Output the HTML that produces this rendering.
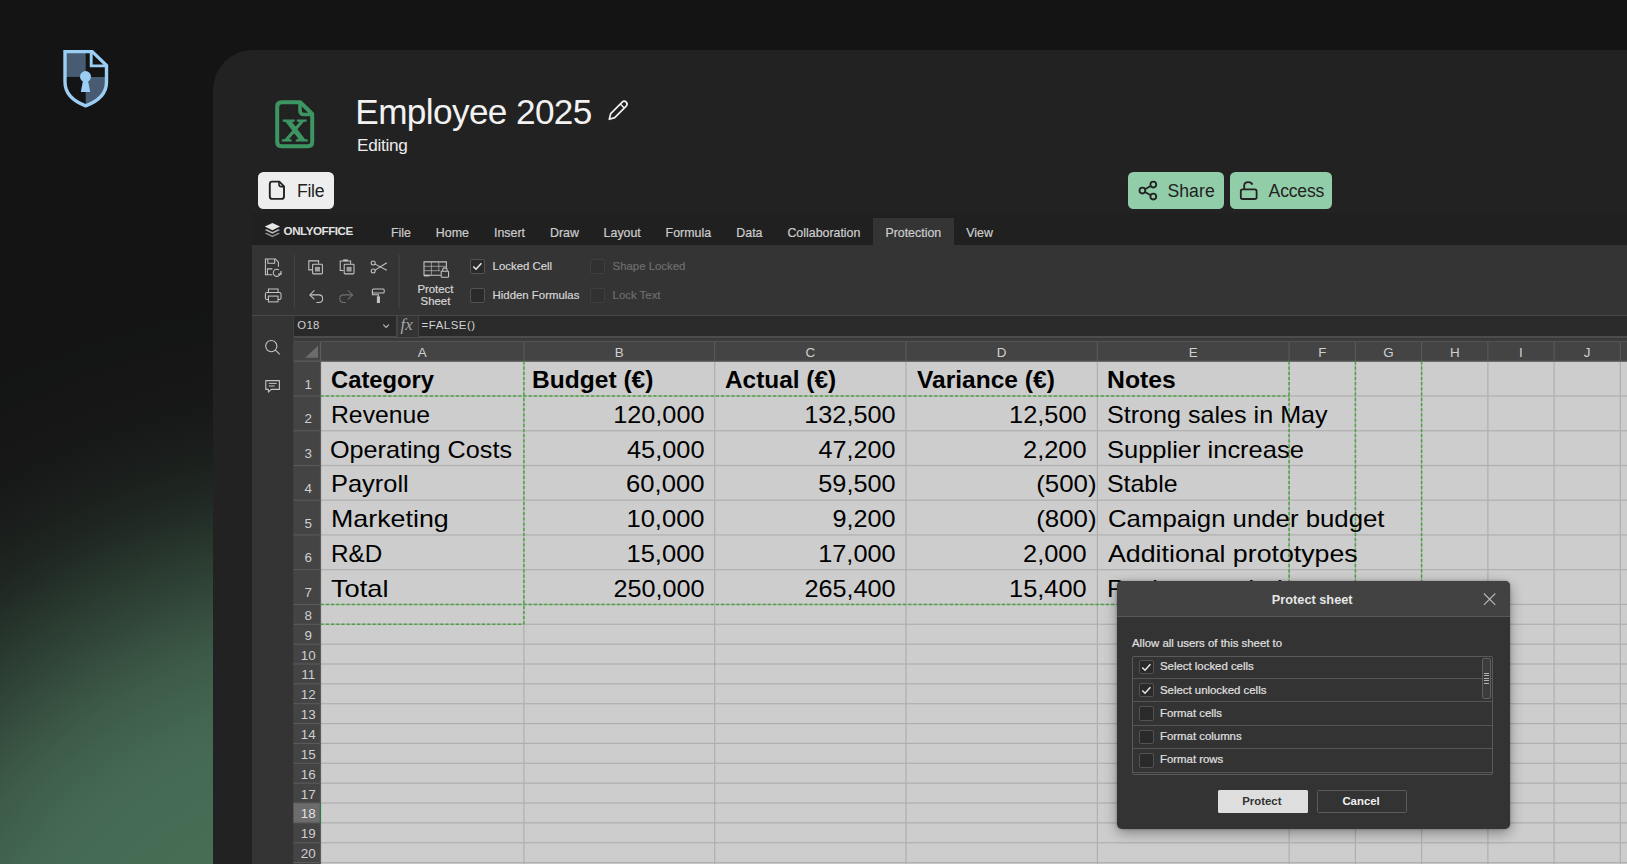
<!DOCTYPE html>
<html><head><meta charset="utf-8"><title>Employee 2025</title>
<style>
*{box-sizing:border-box;margin:0;padding:0}
html,body{width:1627px;height:864px;overflow:hidden;background:#141414;font-family:"Liberation Sans",sans-serif;}
.abs{position:absolute}
.t{position:absolute;white-space:nowrap;line-height:1;}
.ui{font-size:11.4px;color:#d6d6d6;-webkit-text-stroke:0.2px currentColor;}
.tab{position:absolute;font-size:12.4px;color:#cdcdcd;top:226.7px;-webkit-text-stroke:0.2px #cdcdcd;white-space:nowrap;line-height:1}
.cell{position:absolute;white-space:nowrap;line-height:1;font-size:23.4px;color:#000;}
.rh{position:absolute;color:#cfcfcf;font-size:13.4px;line-height:1;text-align:center;white-space:nowrap}
.ch{position:absolute;color:#cfcfcf;font-size:13.4px;line-height:1;text-align:center;white-space:nowrap}
.cb{position:absolute;width:14.5px;height:14.5px;border:1px solid #505050;background:#2a2a2a;border-radius:2px}
</style></head><body>

<div class="abs" id="glow" style="left:0;top:0;width:1627px;height:864px;background:radial-gradient(circle 803px at 350px 1090px,#486e56 0px,#486e56 263px,#486d55 290px,#476c55 317px,#466b54 344px,#456952 371px,#436650 398px,#40614c 425px,#3d5b48 452px,#395342 479px,#334a3c 506px,#2e4135 533px,#29382e 560px,#232f28 587px,#1f2722 614px,#1c211e 641px,#191c1a 668px,#171918 695px,#161716 722px,#151615 749px,#141515 776px,#141414 803px);"></div>
<svg class="abs" style="left:60px;top:46px" width="52" height="64" viewBox="60 46 52 64">
<path d="M65 51.6H92.2L106.5 65.4V82C106.5 94.5 97 101.6 85.7 105.8C74.4 101.6 65 94.5 65 82Z" fill="#141414"/>
<path d="M65 51.6H85.7V76.9H65Z" fill="#475c72"/>
<path d="M85.7 76.9H106.5V82C106.5 94.5 97 101.6 85.7 105.8Z" fill="#475c72"/>
<path d="M91.2 52V65.9H105.5" fill="none" stroke="#9ccdf5" stroke-width="2.9"/>
<path d="M65 51.6H92.2L106.5 65.4V82C106.5 94.5 97 101.6 85.7 105.8C74.4 101.6 65 94.5 65 82Z" fill="none" stroke="#9ccdf5" stroke-width="3.4" stroke-linejoin="miter"/>
<circle cx="85.5" cy="76.6" r="5.5" fill="#9ccdf5"/>
<path d="M83.3 79H87.7L90.2 92H80.8Z" fill="#9ccdf5"/>
</svg>
<div class="abs" style="left:213px;top:50.2px;width:1500px;height:900px;background:#222222;border-radius:40px 0 0 0;"></div>
<svg class="abs" style="left:270px;top:95px" width="50" height="60" viewBox="270 95 50 60">
<path d="M281.5 102.3H300.5L312.2 114V141.8Q312.2 146.3 307.7 146.3H281.5Q277.2 146.3 277.2 141.8V106.8Q277.2 102.3 281.5 102.3Z" fill="none" stroke="#3d9562" stroke-width="4" stroke-linejoin="round"/>
<path d="M300 103V110.5Q300 114.5 304 114.5H311.5" fill="none" stroke="#3d9562" stroke-width="3.6"/>
<text x="0" y="0" transform="translate(294.9 141.4) scale(1.1 0.98)" text-anchor="middle" font-family="Liberation Serif" font-size="47" fill="#3d9562" stroke="#3d9562" stroke-width="1.2">x</text>
</svg>
<div class="t" id="title" style="left:355.3px;top:94.3px;font-size:35.2px;color:#f2f2f2;letter-spacing:-0.62px">Employee 2025</div>
<div class="t" id="editing" style="left:357px;top:136.6px;font-size:17.2px;color:#ececec;letter-spacing:-0.3px">Editing</div>
<svg class="abs" style="left:604px;top:96px" width="28" height="28" viewBox="604 96 28 28">
<path d="M609.3 119.3L610.7 113.6L622.2 102.1Q624.2 100.1 626.2 102.1Q628.2 104.1 626.2 106.1L614.7 117.6Z" fill="none" stroke="#f0f0f0" stroke-width="1.7" stroke-linejoin="round"/>
<path d="M620.3 104L624.3 108" stroke="#f0f0f0" stroke-width="1.5"/>
</svg>
<div class="abs" style="left:257.8px;top:172.1px;width:76.6px;height:36.6px;background:#eeeeee;border-radius:5.5px"></div>
<svg class="abs" style="left:265px;top:177px" width="24" height="26" viewBox="265 177 24 26">
<path d="M272.2 181.6H279.3L284 186.3V196.5Q284 198.9 281.6 198.9H272.2Q269.8 198.9 269.8 196.5V184Q269.8 181.6 272.2 181.6Z" fill="none" stroke="#222" stroke-width="1.9" stroke-linejoin="round"/>
<path d="M279 182V184.6Q279 186.6 281 186.6H283.6" fill="none" stroke="#222" stroke-width="1.6"/>
</svg>
<div class="t" id="filebtn" style="left:297px;top:182.9px;font-size:17.6px;color:#222;letter-spacing:-0.3px">File</div>
<div class="abs" style="left:1128.4px;top:172.1px;width:95.6px;height:36.6px;background:#92cdaa;border-radius:5.5px"></div>
<div class="abs" style="left:1229.8px;top:172.1px;width:102.7px;height:36.6px;background:#92cdaa;border-radius:5.5px"></div>
<svg class="abs" style="left:1135px;top:178px" width="26" height="26" viewBox="1135 178 26 26">
<g fill="none" stroke="#222" stroke-width="1.8">
<circle cx="1153.3" cy="184.6" r="2.9"/><circle cx="1142.4" cy="190.6" r="2.9"/><circle cx="1153.3" cy="196.6" r="2.9"/>
<path d="M1144.9 189.2L1150.8 186M1144.9 192L1150.8 195.2"/>
</g></svg>
<div class="t" id="share" style="left:1167.4px;top:182.9px;font-size:17.6px;color:#222;letter-spacing:0.1px">Share</div>
<svg class="abs" style="left:1236px;top:178px" width="26" height="26" viewBox="1236 178 26 26">
<g fill="none" stroke="#222" stroke-width="1.8" stroke-linejoin="round">
<rect x="1240.8" y="189.4" width="15.8" height="9.6" rx="1.8"/>
<path d="M1244.2 189.2V185.6Q1244.2 182.2 1248.2 182.2Q1251.6 182.2 1252.4 184.6"/>
</g></svg>
<div class="t" id="access" style="left:1268.6px;top:182.9px;font-size:17.6px;color:#222;letter-spacing:-0.2px">Access</div>
<div class="abs" style="left:252.2px;top:213.0px;width:1400px;height:32.30000000000001px;background:#202020"></div>
<div class="abs" style="left:252.2px;top:245.3px;width:1400px;height:70.19999999999999px;background:#343434"></div>
<div class="abs" style="left:252.2px;top:315.5px;width:1400px;height:548.5px;background:#343434"></div>
<div class="abs" style="left:872.7px;top:217.8px;width:81px;height:28.5px;background:#343434"></div>
<svg class="abs" style="left:262px;top:220px" width="22" height="20" viewBox="262 220 22 20">
<path d="M272.4 223L280 226.6L272.4 230.2L264.8 226.6Z" fill="#e6e6e6"/>
<path d="M266.6 229.2L264.8 230.1L272.4 233.7L280 230.1L278.2 229.2L272.4 232Z" fill="#bdbdbd"/>
<path d="M266.6 232.7L264.8 233.6L272.4 237.2L280 233.6L278.2 232.7L272.4 235.5Z" fill="#8f8f8f"/>
</svg>
<div class="t" id="oo" style="left:283.6px;top:224.9px;font-size:11.6px;font-weight:bold;color:#e2e2e2;letter-spacing:-0.45px">ONLYOFFICE</div>
<div class="tab" id="tab0" style="left:391.0px">File</div>
<div class="tab" id="tab1" style="left:435.8px">Home</div>
<div class="tab" id="tab2" style="left:494.0px">Insert</div>
<div class="tab" id="tab3" style="left:550.0px">Draw</div>
<div class="tab" id="tab4" style="left:603.6px">Layout</div>
<div class="tab" id="tab5" style="left:665.6px">Formula</div>
<div class="tab" id="tab6" style="left:736.3px">Data</div>
<div class="tab" id="tab7" style="left:787.4px">Collaboration</div>
<div class="tab" id="tab8" style="left:885.4px">Protection</div>
<div class="tab" id="tab9" style="left:966.3px">View</div>
<svg class="abs" style="left:252.2px;top:245.8px" width="220" height="70.19999999999999" viewBox="252.2 245.3 220 70.19999999999999">
<g fill="none" stroke="#c4c4c4" stroke-width="1.05">
<!-- save -->
<path d="M272.5 274H265.6V258.4H275.6L278.6 261.4V266"/>
<path d="M268 258.6V262.6H274.8V258.6"/>
<path d="M267.6 274V268.2H272.6"/>
<path d="M279.2 269.2A3.6 3.6 0 1 0 280.6 272.6" />
<path d="M281.2 270.4V273.4H278.2" stroke-width="1.2"/>
<!-- print -->
<path d="M268.6 291.8V288.4H278.2V291.8"/>
<rect x="265.6" y="291.8" width="15.6" height="7" rx="1.4"/>
<rect x="268.6" y="295.4" width="9.6" height="5.8" fill="#343434"/>
<!-- separators -->
<path d="M294.5 254V307.6M399.3 254V307.6" stroke="#474747" stroke-width="1"/>
<!-- copy -->
<path d="M312.4 269.2H309V260.2H318.8V263"/>
<rect x="312.8" y="263.6" width="9.8" height="9.6" rx="0.8"/>
<rect x="315.2" y="266.2" width="5" height="4.6" fill="#c4c4c4" stroke="none" opacity="0.75"/>
<!-- paste -->
<path d="M343.8 269.8H340.4V260.4H350.8V263"/>
<path d="M343.4 259.6H348" stroke-width="1.8"/>
<rect x="344.4" y="263.6" width="9.8" height="9.6" rx="0.8"/>
<rect x="346.8" y="266.2" width="5" height="4.6" fill="#c4c4c4" stroke="none" opacity="0.75"/>
<!-- scissors -->
<circle cx="373.4" cy="262.4" r="2"/><circle cx="373.4" cy="270.4" r="2"/>
<path d="M375.2 263.4L387 269.6M375.2 269.4L387 262"/>
<!-- undo -->
<path d="M314.6 289.6L310 294.2L314.6 298.8"/>
<path d="M310.4 294.2H319Q322.8 294.2 322.8 298Q322.8 301.8 319 301.8H316.6"/>
<!-- paint roller -->
<rect x="372.6" y="288.4" width="11.8" height="4" rx="1"/>
<path d="M372.6 290.4V294H378.6V296"/>
<rect x="377.6" y="296.2" width="2" height="5.6" fill="#c4c4c4"/>
</g>
<g fill="none" stroke="#6f6f6f" stroke-width="1.05">
<!-- redo (disabled) -->
<path d="M348.2 289.6L352.8 294.2L348.2 298.8"/>
<path d="M352.4 294.2H343.8Q340 294.2 340 298Q340 301.8 343.8 301.8H346.2"/>
</g>
<!-- protect sheet -->
<g fill="none" stroke="#c4c4c4" stroke-width="1.05">
<path d="M441 274.6H424.2V261.2H446.6V267"/>
<path d="M424.2 265.6H446.4M424.2 270H440.6M431.6 261.2V274.6M439 261.2V270" stroke-width="0.8" opacity="0.8"/>
<path d="M424.2 274.9H429.6" stroke-width="1.6"/>
<rect x="441.4" y="270.6" width="7.4" height="6" rx="0.8"/>
<path d="M443 270.4V269Q443 267.2 445.1 267.2Q447.2 267.2 447.2 269V270.4"/>
</g>
</svg>
<div class="t ui" id="prot1" style="left:417.4px;top:283.6px;">Protect</div>
<div class="t ui" id="prot2" style="left:420.6px;top:295.5px;">Sheet</div>
<div class="cb" style="left:470.3px;top:259.3px;border-color:#525252;background:#2a2a2a"></div>
<svg class="abs" style="left:470.3px;top:259.3px" width="14.5" height="14.5" viewBox="0 0 14.5 14.5"><path d="M3.3 7.5L6 10.2L11.4 4.2" fill="none" stroke="#e8e8e8" stroke-width="1.5"/></svg>
<div class="cb" style="left:470.3px;top:288.4px;border-color:#525252;background:#2a2a2a"></div>
<div class="cb" style="left:590.0px;top:259.3px;border-color:#3f3f3f;background:#313131"></div>
<div class="cb" style="left:590.0px;top:288.4px;border-color:#3f3f3f;background:#313131"></div>
<div class="t ui" id="lc" style="left:492.6px;top:261.3px;">Locked Cell</div>
<div class="t ui" id="hf" style="left:492.6px;top:290.3px;">Hidden Formulas</div>
<div class="t ui" id="sl" style="left:612.6px;top:261.3px;color:#6e6e6e">Shape Locked</div>
<div class="t ui" id="lt" style="left:612.6px;top:290.3px;color:#6e6e6e">Lock Text</div>
<div class="abs" style="left:252.2px;top:314.9px;width:1400px;height:1.2px;background:#484848"></div>
<div class="abs" style="left:293.5px;top:316.1px;width:1400px;height:20.599999999999987px;background:#2a2a2a"></div>
<div class="abs" style="left:293.5px;top:336.7px;width:1400px;height:4.600000000000023px;background:#3a3a3a"></div>
<div class="abs" style="left:293.5px;top:336.3px;width:1400px;height:1.3px;background:#4c4c4c"></div>
<div class="abs" style="left:396.2px;top:316.1px;width:22.6px;height:20.599999999999987px;background:#343434;border-left:2px solid #444;border-right:1px solid #444"></div>
<div class="t" id="o18" style="left:297.2px;top:320.2px;font-size:11.4px;color:#cfcfcf;letter-spacing:0.35px">O18</div>
<svg class="abs" style="left:380px;top:320px" width="12" height="12" viewBox="0 0 12 12"><path d="M3.3 4.7L6.1 7.5L8.9 4.7" fill="none" stroke="#bdbdbd" stroke-width="1.1"/></svg>
<div class="t" id="fx" style="left:400.6px;top:317px;font-family:'Liberation Serif',serif;font-style:italic;font-size:16.8px;color:#a8a8a8;letter-spacing:0px">fx</div>
<div class="t" id="formula" style="left:421.6px;top:320.4px;font-size:11.4px;color:#d2d2d2;letter-spacing:0.55px">=FALSE()</div>
<div class="abs" style="left:292.9px;top:315.5px;width:1px;height:600px;background:#3e3e3e"></div>
<svg class="abs" style="left:260px;top:336px" width="26" height="62" viewBox="260 336 26 62">
<g fill="none" stroke="#c4c4c4" stroke-width="1.1">
<circle cx="271.3" cy="346.1" r="5.6"/><path d="M275.4 350.2L279.8 354.4"/>
<path d="M265.8 380.6H279.4V389.4H271.2L268.4 392.2V389.4H265.8Z" stroke-linejoin="round"/>
<path d="M268.8 383.4H276.6M268.8 386H274.6" stroke-width="1"/>
</g></svg>
<div class="abs" style="left:293.5px;top:341.3px;width:1346.5px;height:522.7px;background:#cdcdcd"></div>
<svg class="abs" style="left:0;top:0" width="1627" height="864" viewBox="0 0 1627 864" shape-rendering="auto">
<rect x="293.5" y="341.3" width="1346.5" height="20.0" fill="#444444"/>
<rect x="293.5" y="341.3" width="27.100000000000023" height="522.7" fill="#444444"/>
<rect x="293.5" y="803.01" width="27.100000000000023" height="19.86" fill="#6c6c6c"/>
<rect x="320.6" y="395.43" width="1319.4" height="1.2" fill="#afafaf"/>
<rect x="320.6" y="430.16" width="1319.4" height="1.2" fill="#afafaf"/>
<rect x="320.6" y="464.89" width="1319.4" height="1.2" fill="#afafaf"/>
<rect x="320.6" y="499.62" width="1319.4" height="1.2" fill="#afafaf"/>
<rect x="320.6" y="534.35" width="1319.4" height="1.2" fill="#afafaf"/>
<rect x="320.6" y="569.08" width="1319.4" height="1.2" fill="#afafaf"/>
<rect x="320.6" y="603.81" width="1319.4" height="1.2" fill="#afafaf"/>
<rect x="320.6" y="623.67" width="1319.4" height="1.2" fill="#afafaf"/>
<rect x="320.6" y="643.53" width="1319.4" height="1.2" fill="#afafaf"/>
<rect x="320.6" y="663.39" width="1319.4" height="1.2" fill="#afafaf"/>
<rect x="320.6" y="683.25" width="1319.4" height="1.2" fill="#afafaf"/>
<rect x="320.6" y="703.11" width="1319.4" height="1.2" fill="#afafaf"/>
<rect x="320.6" y="722.97" width="1319.4" height="1.2" fill="#afafaf"/>
<rect x="320.6" y="742.83" width="1319.4" height="1.2" fill="#afafaf"/>
<rect x="320.6" y="762.69" width="1319.4" height="1.2" fill="#afafaf"/>
<rect x="320.6" y="782.55" width="1319.4" height="1.2" fill="#afafaf"/>
<rect x="320.6" y="802.41" width="1319.4" height="1.2" fill="#afafaf"/>
<rect x="320.6" y="822.27" width="1319.4" height="1.2" fill="#afafaf"/>
<rect x="320.6" y="842.13" width="1319.4" height="1.2" fill="#afafaf"/>
<rect x="320.6" y="861.99" width="1319.4" height="1.2" fill="#afafaf"/>
<rect x="523.30" y="361.3" width="1.2" height="502.7" fill="#afafaf"/>
<rect x="714.10" y="361.3" width="1.2" height="502.7" fill="#afafaf"/>
<rect x="905.40" y="361.3" width="1.2" height="502.7" fill="#afafaf"/>
<rect x="1096.80" y="361.3" width="1.2" height="502.7" fill="#afafaf"/>
<rect x="1288.50" y="361.3" width="1.2" height="502.7" fill="#afafaf"/>
<rect x="1354.80" y="361.3" width="1.2" height="502.7" fill="#afafaf"/>
<rect x="1421.00" y="361.3" width="1.2" height="502.7" fill="#afafaf"/>
<rect x="1487.30" y="361.3" width="1.2" height="502.7" fill="#afafaf"/>
<rect x="1553.50" y="361.3" width="1.2" height="502.7" fill="#afafaf"/>
<rect x="1619.70" y="361.3" width="1.2" height="502.7" fill="#afafaf"/>
<rect x="1685.90" y="361.3" width="1.2" height="502.7" fill="#afafaf"/>
<rect x="293.5" y="395.53" width="27.100000000000023" height="1" fill="#5c5c5c"/>
<rect x="293.5" y="430.26" width="27.100000000000023" height="1" fill="#5c5c5c"/>
<rect x="293.5" y="464.99" width="27.100000000000023" height="1" fill="#5c5c5c"/>
<rect x="293.5" y="499.72" width="27.100000000000023" height="1" fill="#5c5c5c"/>
<rect x="293.5" y="534.45" width="27.100000000000023" height="1" fill="#5c5c5c"/>
<rect x="293.5" y="569.18" width="27.100000000000023" height="1" fill="#5c5c5c"/>
<rect x="293.5" y="603.91" width="27.100000000000023" height="1" fill="#5c5c5c"/>
<rect x="293.5" y="623.77" width="27.100000000000023" height="1" fill="#5c5c5c"/>
<rect x="293.5" y="643.63" width="27.100000000000023" height="1" fill="#5c5c5c"/>
<rect x="293.5" y="663.49" width="27.100000000000023" height="1" fill="#5c5c5c"/>
<rect x="293.5" y="683.35" width="27.100000000000023" height="1" fill="#5c5c5c"/>
<rect x="293.5" y="703.21" width="27.100000000000023" height="1" fill="#5c5c5c"/>
<rect x="293.5" y="723.07" width="27.100000000000023" height="1" fill="#5c5c5c"/>
<rect x="293.5" y="742.93" width="27.100000000000023" height="1" fill="#5c5c5c"/>
<rect x="293.5" y="762.79" width="27.100000000000023" height="1" fill="#5c5c5c"/>
<rect x="293.5" y="782.65" width="27.100000000000023" height="1" fill="#5c5c5c"/>
<rect x="293.5" y="802.51" width="27.100000000000023" height="1" fill="#5c5c5c"/>
<rect x="293.5" y="822.37" width="27.100000000000023" height="1" fill="#5c5c5c"/>
<rect x="293.5" y="842.23" width="27.100000000000023" height="1" fill="#5c5c5c"/>
<rect x="293.5" y="862.09" width="27.100000000000023" height="1" fill="#5c5c5c"/>
<rect x="523.40" y="341.3" width="1" height="20.0" fill="#5c5c5c"/>
<rect x="714.20" y="341.3" width="1" height="20.0" fill="#5c5c5c"/>
<rect x="905.50" y="341.3" width="1" height="20.0" fill="#5c5c5c"/>
<rect x="1096.90" y="341.3" width="1" height="20.0" fill="#5c5c5c"/>
<rect x="1288.60" y="341.3" width="1" height="20.0" fill="#5c5c5c"/>
<rect x="1354.90" y="341.3" width="1" height="20.0" fill="#5c5c5c"/>
<rect x="1421.10" y="341.3" width="1" height="20.0" fill="#5c5c5c"/>
<rect x="1487.40" y="341.3" width="1" height="20.0" fill="#5c5c5c"/>
<rect x="1553.60" y="341.3" width="1" height="20.0" fill="#5c5c5c"/>
<rect x="1619.80" y="341.3" width="1" height="20.0" fill="#5c5c5c"/>
<rect x="1686.00" y="341.3" width="1" height="20.0" fill="#5c5c5c"/>
<rect x="293.5" y="360.6" width="1346.5" height="1.2" fill="#5c5c5c"/>
<rect x="319.90000000000003" y="341.3" width="1.2" height="522.7" fill="#5c5c5c"/>
<rect x="293.5" y="340.8" width="1346.5" height="1" fill="#4e4e4e"/>
<path d="M305.2 357.8H318V345.8Z" fill="#6c6c6c"/>
<rect x="319.70000000000005" y="803.01" width="1.3" height="19.86" fill="#2c7a45"/>
<path d="M320.6 396.03000000000003L1289.1 396.03000000000003" stroke="#4aa340" stroke-width="1.5" stroke-dasharray="3.2 2" fill="none"/>
<path d="M523.9 361.3L523.9 624.27" stroke="#4aa340" stroke-width="1.5" stroke-dasharray="3.2 2" fill="none"/>
<path d="M320.6 604.41L1421.6 604.41" stroke="#4aa340" stroke-width="1.5" stroke-dasharray="3.2 2" fill="none"/>
<path d="M320.6 624.27L523.9 624.27" stroke="#4aa340" stroke-width="1.5" stroke-dasharray="3.2 2" fill="none"/>
<path d="M1289.1 361.3L1289.1 604.41" stroke="#4aa340" stroke-width="1.5" stroke-dasharray="3.2 2" fill="none"/>
<path d="M1355.4 361.3L1355.4 604.41" stroke="#4aa340" stroke-width="1.5" stroke-dasharray="3.2 2" fill="none"/>
<path d="M1421.6 361.3L1421.6 604.41" stroke="#4aa340" stroke-width="1.5" stroke-dasharray="3.2 2" fill="none"/>
</svg>
<div class="ch" style="left:320.6px;width:203.29999999999995px;top:345.66px">A</div>
<div class="ch" style="left:523.9px;width:190.80000000000007px;top:345.66px">B</div>
<div class="ch" style="left:714.7px;width:191.29999999999995px;top:345.66px">C</div>
<div class="ch" style="left:906.0px;width:191.4000000000001px;top:345.66px">D</div>
<div class="ch" style="left:1097.4px;width:191.69999999999982px;top:345.66px">E</div>
<div class="ch" style="left:1289.1px;width:66.30000000000018px;top:345.66px">F</div>
<div class="ch" style="left:1355.4px;width:66.19999999999982px;top:345.66px">G</div>
<div class="ch" style="left:1421.6px;width:66.30000000000018px;top:345.66px">H</div>
<div class="ch" style="left:1487.9px;width:66.19999999999982px;top:345.66px">I</div>
<div class="ch" style="left:1554.1px;width:66.20000000000005px;top:345.66px">J</div>
<div class="ch" style="left:1620.3px;width:66.20000000000005px;top:345.66px">K</div>
<div class="rh" style="left:294.7px;width:27.100000000000023px;top:377.59px;color:#cfcfcf">1</div>
<div class="rh" style="left:294.7px;width:27.100000000000023px;top:412.32px;color:#cfcfcf">2</div>
<div class="rh" style="left:294.7px;width:27.100000000000023px;top:447.05px;color:#cfcfcf">3</div>
<div class="rh" style="left:294.7px;width:27.100000000000023px;top:481.78px;color:#cfcfcf">4</div>
<div class="rh" style="left:294.7px;width:27.100000000000023px;top:516.51px;color:#cfcfcf">5</div>
<div class="rh" style="left:294.7px;width:27.100000000000023px;top:551.24px;color:#cfcfcf">6</div>
<div class="rh" style="left:294.7px;width:27.100000000000023px;top:585.97px;color:#cfcfcf">7</div>
<div class="rh" style="left:294.7px;width:27.100000000000023px;top:608.83px;color:#cfcfcf">8</div>
<div class="rh" style="left:294.7px;width:27.100000000000023px;top:628.69px;color:#cfcfcf">9</div>
<div class="rh" style="left:294.7px;width:27.100000000000023px;top:648.55px;color:#cfcfcf">10</div>
<div class="rh" style="left:294.7px;width:27.100000000000023px;top:668.41px;color:#cfcfcf">11</div>
<div class="rh" style="left:294.7px;width:27.100000000000023px;top:688.27px;color:#cfcfcf">12</div>
<div class="rh" style="left:294.7px;width:27.100000000000023px;top:708.13px;color:#cfcfcf">13</div>
<div class="rh" style="left:294.7px;width:27.100000000000023px;top:727.99px;color:#cfcfcf">14</div>
<div class="rh" style="left:294.7px;width:27.100000000000023px;top:747.85px;color:#cfcfcf">15</div>
<div class="rh" style="left:294.7px;width:27.100000000000023px;top:767.71px;color:#cfcfcf">16</div>
<div class="rh" style="left:294.7px;width:27.100000000000023px;top:787.57px;color:#cfcfcf">17</div>
<div class="rh" style="left:294.7px;width:27.100000000000023px;top:807.43px;color:#e0e0e0">18</div>
<div class="rh" style="left:294.7px;width:27.100000000000023px;top:827.29px;color:#cfcfcf">19</div>
<div class="rh" style="left:294.7px;width:27.100000000000023px;top:847.15px;color:#cfcfcf">20</div>
<div class="rh" style="left:294.7px;width:27.100000000000023px;top:867.01px;color:#cfcfcf">21</div>
<div class="cell" id="c1a" style="top:369.22px;transform:scaleX(1.0163);font-weight:bold;left:331.10px;transform-origin:0 0;">Category</div>
<div class="cell" id="c1b" style="top:369.22px;transform:scaleX(1.0498);font-weight:bold;left:532.29px;transform-origin:0 0;">Budget (€)</div>
<div class="cell" id="c1c" style="top:369.22px;transform:scaleX(1.0427);font-weight:bold;left:724.72px;transform-origin:0 0;">Actual (€)</div>
<div class="cell" id="c1d" style="top:369.22px;transform:scaleX(1.0498);font-weight:bold;left:916.75px;transform-origin:0 0;">Variance (€)</div>
<div class="cell" id="c1e" style="top:369.22px;transform:scaleX(1.0587);font-weight:bold;left:1106.93px;transform-origin:0 0;">Notes</div>
<div class="cell" id="c2a" style="top:403.95px;transform:scaleX(1.0579);left:330.92px;transform-origin:0 0;">Revenue</div>
<div class="cell" id="c3a" style="top:438.68px;transform:scaleX(1.0767);left:330.17px;transform-origin:0 0;">Operating Costs</div>
<div class="cell" id="c4a" style="top:473.41px;transform:scaleX(1.0870);left:331.00px;transform-origin:0 0;">Payroll</div>
<div class="cell" id="c5a" style="top:508.14px;transform:scaleX(1.1467);left:330.60px;transform-origin:0 0;">Marketing</div>
<div class="cell" id="c6a" style="top:542.87px;transform:scaleX(1.0350);left:331.30px;transform-origin:0 0;">R&amp;D</div>
<div class="cell" id="c7a" style="top:577.60px;transform:scaleX(1.1641);left:330.58px;transform-origin:0 0;">Total</div>
<div class="cell" id="c2b" style="top:403.95px;transform:scaleX(1.0812);right:922.55px;transform-origin:100% 0;">120,000</div>
<div class="cell" id="c3b" style="top:438.68px;transform:scaleX(1.0851);right:922.57px;transform-origin:100% 0;">45,000</div>
<div class="cell" id="c4b" style="top:473.41px;transform:scaleX(1.0974);right:922.21px;transform-origin:100% 0;">60,000</div>
<div class="cell" id="c5b" style="top:508.14px;transform:scaleX(1.0916);right:922.02px;transform-origin:100% 0;">10,000</div>
<div class="cell" id="c6b" style="top:542.87px;transform:scaleX(1.0916);right:922.02px;transform-origin:100% 0;">15,000</div>
<div class="cell" id="c7b" style="top:577.60px;transform:scaleX(1.0783);right:922.47px;transform-origin:100% 0;">250,000</div>
<div class="cell" id="c2c" style="top:403.95px;transform:scaleX(1.0798);right:731.88px;transform-origin:100% 0;">132,500</div>
<div class="cell" id="c3c" style="top:438.68px;transform:scaleX(1.0760);right:731.60px;transform-origin:100% 0;">47,200</div>
<div class="cell" id="c4c" style="top:473.41px;transform:scaleX(1.0798);right:731.96px;transform-origin:100% 0;">59,500</div>
<div class="cell" id="c5c" style="top:508.14px;transform:scaleX(1.0769);right:731.84px;transform-origin:100% 0;">9,200</div>
<div class="cell" id="c6c" style="top:542.87px;transform:scaleX(1.0802);right:731.88px;transform-origin:100% 0;">17,000</div>
<div class="cell" id="c7c" style="top:577.60px;transform:scaleX(1.0781);right:731.86px;transform-origin:100% 0;">265,400</div>
<div class="cell" id="c2d" style="top:403.95px;transform:scaleX(1.0826);right:540.15px;transform-origin:100% 0;">12,500</div>
<div class="cell" id="c3d" style="top:438.68px;transform:scaleX(1.0843);right:540.01px;transform-origin:100% 0;">2,200</div>
<div class="cell" id="c4d" style="top:473.41px;transform:scaleX(1.1055);right:530.40px;transform-origin:100% 0;">(500)</div>
<div class="cell" id="c5d" style="top:508.14px;transform:scaleX(1.1055);right:530.40px;transform-origin:100% 0;">(800)</div>
<div class="cell" id="c6d" style="top:542.87px;transform:scaleX(1.0843);right:540.01px;transform-origin:100% 0;">2,000</div>
<div class="cell" id="c7d" style="top:577.60px;transform:scaleX(1.0826);right:540.15px;transform-origin:100% 0;">15,400</div>
<div class="cell" id="c2e" style="top:403.95px;transform:scaleX(1.0739);left:1107.24px;transform-origin:0 0;">Strong sales in May</div>
<div class="cell" id="c3e" style="top:438.68px;transform:scaleX(1.0892);left:1107.20px;transform-origin:0 0;">Supplier increase</div>
<div class="cell" id="c4e" style="top:473.41px;transform:scaleX(1.0643);left:1107.25px;transform-origin:0 0;">Stable</div>
<div class="cell" id="c5e" style="top:508.14px;transform:scaleX(1.1017);left:1107.56px;transform-origin:0 0;">Campaign under budget</div>
<div class="cell" id="c6e" style="top:542.87px;transform:scaleX(1.1432);left:1107.68px;transform-origin:0 0;">Additional prototypes</div>
<div class="cell" id="c7e" style="top:577.60px;transform:scaleX(1.0892);left:1107.20px;transform-origin:0 0;">Review needed</div>
<div class="abs" style="left:1116.5px;top:581.2px;width:393.4000000000001px;height:248.0999999999999px;background:#333333;border-radius:5px;box-shadow:0 4px 13px rgba(0,0,0,0.36),0 0 3px rgba(0,0,0,0.28);overflow:hidden"><div class="abs" style="left:0;top:0;width:100%;height:35.5px;background:#424242;border-bottom:1px solid #585858"></div></div>
<div class="t" id="dtitle" style="left:1271.8px;top:594px;font-size:12.75px;font-weight:bold;color:#e6e6e6">Protect sheet</div>
<svg class="abs" style="left:1480px;top:590px" width="18" height="18" viewBox="1480 590 18 18"><path d="M1483.9 593.5L1495.3 604.9M1495.3 593.5L1483.9 604.9" stroke="#b8b8b8" stroke-width="1.1" fill="none"/></svg>
<div class="t ui" id="allow" style="left:1132px;top:638px;color:#e0e0e0">Allow all users of this sheet to</div>
<div class="abs" style="left:1132.2px;top:655.9px;width:361.0px;height:118.89999999999998px;border:1px solid #5a5a5a;border-radius:2px;background:#333333"></div>
<div class="abs" style="left:1133.2px;top:677.90px;width:359.0px;height:1px;background:#555555"></div>
<div class="cb" style="left:1139.1px;top:659.9499999999999px;border-color:#525252;background:#2a2a2a"></div>
<svg class="abs" style="left:1139.1px;top:659.9499999999999px" width="14.5" height="14.5" viewBox="0 0 14.5 14.5"><path d="M3.3 7.5L6 10.2L11.4 4.2" fill="none" stroke="#e8e8e8" stroke-width="1.5"/></svg>
<div class="t ui" id="it0" style="left:1160px;top:660.50px;color:#e0e0e0">Select locked cells</div>
<div class="abs" style="left:1133.2px;top:701.40px;width:359.0px;height:1px;background:#555555"></div>
<div class="cb" style="left:1139.1px;top:682.9499999999999px;border-color:#525252;background:#2a2a2a"></div>
<svg class="abs" style="left:1139.1px;top:682.9499999999999px" width="14.5" height="14.5" viewBox="0 0 14.5 14.5"><path d="M3.3 7.5L6 10.2L11.4 4.2" fill="none" stroke="#e8e8e8" stroke-width="1.5"/></svg>
<div class="t ui" id="it1" style="left:1160px;top:685.00px;color:#e0e0e0">Select unlocked cells</div>
<div class="abs" style="left:1133.2px;top:724.60px;width:359.0px;height:1px;background:#555555"></div>
<div class="cb" style="left:1139.1px;top:706.3px;border-color:#525252;background:#2a2a2a"></div>
<div class="t ui" id="it2" style="left:1160px;top:707.80px;color:#e0e0e0">Format cells</div>
<div class="abs" style="left:1133.2px;top:748.20px;width:359.0px;height:1px;background:#555555"></div>
<div class="cb" style="left:1139.1px;top:729.7px;border-color:#525252;background:#2a2a2a"></div>
<div class="t ui" id="it3" style="left:1160px;top:731.00px;color:#e0e0e0">Format columns</div>
<div class="abs" style="left:1133.2px;top:772.00px;width:359.0px;height:1px;background:#555555"></div>
<div class="cb" style="left:1139.1px;top:753.4px;border-color:#525252;background:#2a2a2a"></div>
<div class="t ui" id="it4" style="left:1160px;top:754.10px;color:#e0e0e0">Format rows</div>
<div class="abs" style="left:1482.4px;top:657.7px;width:9px;height:41.6px;border:1px solid #606060;border-radius:2px;background:#3c3c3c"></div>
<div class="abs" style="left:1484.4px;top:672.8px;width:5px;height:1.1px;background:#b4b4b4"></div>
<div class="abs" style="left:1484.4px;top:675.3px;width:5px;height:1.1px;background:#b4b4b4"></div>
<div class="abs" style="left:1484.4px;top:677.8px;width:5px;height:1.1px;background:#b4b4b4"></div>
<div class="abs" style="left:1484.4px;top:680.3px;width:5px;height:1.1px;background:#b4b4b4"></div>
<div class="abs" style="left:1484.4px;top:682.8px;width:5px;height:1.1px;background:#b4b4b4"></div>
<div class="abs" style="left:1218.1px;top:790.4px;width:89.6px;height:22.8px;background:#dedede;border-radius:1.5px"></div>
<div class="abs" style="left:1317.2px;top:790.4px;width:89.9px;height:22.8px;border:1px solid #5c5c5c;background:#333333;border-radius:1.5px"></div>
<div class="t" id="bprot" style="left:1242.2px;top:795.8px;font-size:11.4px;font-weight:bold;color:#333">Protect</div>
<div class="t" id="bcanc" style="left:1342.4px;top:795.8px;font-size:11.4px;font-weight:bold;color:#f0f0f0">Cancel</div>
</body></html>
